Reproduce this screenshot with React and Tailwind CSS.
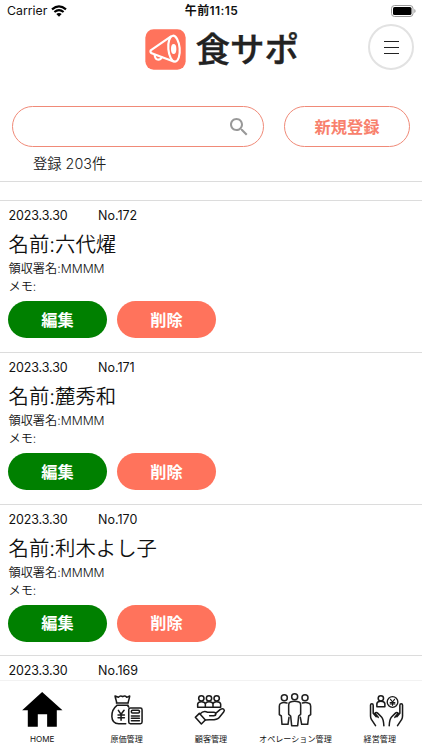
import { useState } from 'react';

const records = [
  { no: 172, date: '2023.3.30', name: '六代燿', receipt: 'MMMM', memo: '' },
  { no: 171, date: '2023.3.30', name: '麓秀和', receipt: 'MMMM', memo: '' },
  { no: 170, date: '2023.3.30', name: '利木よし子', receipt: 'MMMM', memo: '' },
  { no: 169, date: '2023.3.30' }
];

const HomeIcon = () => (
  <svg className="w-[60px] h-10" viewBox="36.6 110 180 120">
    <path d="M127 125L188 180H171V229H142V192H114V229H84V180H67Z" fill="#000" />
  </svg>
);

const CostIcon = () => (
  <svg className="w-[60px] h-10" viewBox="19.8 20 180 120" fill="none" stroke="#1a1a1a" strokeWidth="4.6" strokeLinecap="round" strokeLinejoin="round">
    <path d="M79 67C77 59 75 53 74 47L84 51Q90 44 97 49Q104 44 109 51L118 47C117 54 115 60 113 67" />
    <path d="M78 68H113M80 75H113" />
    <path d="M79 76C60 91 57 130 85 130H106M112 76L115 80" />
    <path d="M84 90L92 102L101 90M92 102V120M83 104H102M83 112H102" />
    <rect x="115" y="83" width="40" height="47" rx="5" />
    <rect x="123" y="90" width="24" height="8" rx="3" />
    <path d="M123 107H147M123 114H147M123 121H147" />
  </svg>
);

const CustomerIcon = () => (
  <svg className="w-[60px] h-10" viewBox="18 20 180 120" fill="none" stroke="#1a1a1a" strokeWidth="4.6" strokeLinecap="round" strokeLinejoin="round">
    <circle cx="79" cy="54" r="8" />
    <circle cx="102" cy="54" r="8" />
    <circle cx="125" cy="54" r="8" />
    <path d="M68 81V71Q69 64 79 64Q90 64 91 71V81ZM91 81V71Q92 64 102 64Q113 64 114 71V81ZM114 81V71Q115 64 125 64Q136 64 137 71V81Z" />
    <path d="M61 111L73 99L91 119L79 131Z" />
    <path d="M75 101C83 92 91 92 98 96H116C125 97 124 106 116 106H104M122 99L136 87C145 82 151 89 146 95L132 112C126 119 117 118 104 118L91 119" />
  </svg>
);

const OperationIcon = () => (
  <svg className="w-[60px] h-10" viewBox="46 20 180 120" fill="none" stroke="#222" strokeWidth="4.6" strokeLinecap="round" strokeLinejoin="round">
    <circle cx="104" cy="52" r="9" />
    <circle cx="135" cy="49" r="9" />
    <circle cx="166" cy="52" r="9" />
    <path d="M122 65Q135 61 148 65Q153 67 153 74V102L147 107L144 136H126L123 107L117 102V74Q117 67 122 65Z" />
    <path d="M112 68Q101 64 93 69Q89 71 89 78V103L95 107L97 132H115L118 111" />
    <path d="M158 68Q169 64 178 69Q183 71 183 78V103L177 107L174 132H156L152 111" />
  </svg>
);

const ManagementIcon = () => (
  <svg className="w-[60px] h-10 overflow-visible" viewBox="29.4 20 180 120" fill="none" stroke="#1a1a1a" strokeWidth="4.6" strokeLinecap="round" strokeLinejoin="round">
    <circle cx="122" cy="54" r="8" />
    <path d="M110 79V70Q111 63 122 63Q133 63 134 70V79Z" />
    <circle cx="157" cy="65" r="16" strokeWidth="4" />
    <path d="M151 57L157 65L163 57M157 65V75M150 67H164M150 71H164" strokeWidth="3.5" />
    <path d="M106 136L94 118Q91 114 91 107V74Q91 70 95 70Q99 70 99 75V99L108 109M104 99Q108 94 113 99L124 110Q130 116 131 136M104 99L114 111" />
    <path d="M172 136L184 118Q187 114 187 107V74Q187 70 183 70Q179 70 179 75V99L170 109M174 99Q170 94 165 99L154 110Q148 116 147 136M174 99L164 111" />
  </svg>
);

const tabs = [
  { label: 'HOME', Icon: HomeIcon },
  { label: '原価管理', Icon: CostIcon },
  { label: '顧客管理', Icon: CustomerIcon },
  { label: 'オペレーション管理', Icon: OperationIcon },
  { label: '経営管理', Icon: ManagementIcon }
];

function StatusBar() {
  return (
    <div className="h-[22px] pl-[7px] pr-1.5 grid grid-cols-3 items-center text-[12.3px] leading-[22px] shrink-0">
      <div className="flex items-center gap-1">
        <span>Carrier</span>
        <svg className="w-4 h-3" viewBox="0 0 16 12" fill="none" stroke="#000" strokeWidth="2.2">
          <path d="M1 4.3Q8 -1.7 15 4.3M3.4 7Q8 3.2 12.6 7" />
          <path d="M8 11.7L5.3 8.9Q8 6.9 10.7 8.9Z" fill="#000" stroke="none" />
        </svg>
      </div>
      <div className="text-center text-[12px] tracking-[0.4px] font-semibold whitespace-nowrap">午前11:15</div>
      <svg className="w-[25px] h-3 justify-self-end -mt-px" viewBox="0 0 25 12">
        <rect x="0.5" y="0.5" width="21.5" height="11" rx="3" fill="none" stroke="#999" />
        <rect x="2" y="2" width="18.5" height="8" rx="1.6" />
        <path d="M23.3 4V8Q24.6 7.3 24.6 6T23.3 4Z" fill="#999" />
      </svg>
    </div>
  );
}

function Header() {
  return (
    <header className="h-[84px] pt-0.5 pl-[145px] pr-2 flex items-start shrink-0">
      <svg className="w-[41px] h-[41px] mt-[5px]" viewBox="434 86 123 123">
        <rect x="435" y="87" width="121" height="121" rx="25" fill="#ff735c" />
        <g fill="none" stroke="#fff" strokeWidth="6.5" strokeLinecap="round" strokeLinejoin="round">
          <ellipse cx="521" cy="145" rx="17" ry="39" transform="rotate(-5 521 145)" />
          <path d="M511 109L451 150Q449 156 454 159L518 183" />
          <path d="M463 164Q464 178 474 178Q481 178 484 171" />
        </g>
        <ellipse cx="520" cy="146" rx="8" ry="15" fill="#fff" />
      </svg>
      <h1 className="ml-[9.5px] text-[34.5px] leading-[51px] font-medium text-[#222] [-webkit-text-stroke:0.4px_#222]">食サポ</h1>
      <button className="ml-auto w-[46px] h-[46px] rounded-full border-2 border-[#e2e2e2] flex flex-col items-center justify-center gap-[5px]">
        <span className="w-[15px] h-px bg-[#222]" />
        <span className="w-[15px] h-px bg-[#222]" />
        <span className="w-[15px] h-px bg-[#222]" />
      </button>
    </header>
  );
}

function RecordRow({ record }) {
  return (
    <li className="h-[151.8px] shrink-0 border-t border-[#dcdcdc] pl-2 pt-1.5">
      <div className="flex text-[12.5px] leading-[18px] pl-[0.5px]">
        <span className="w-[89.5px] tracking-[-0.12px]">{record.date}</span>
        <span>No.{record.no}</span>
      </div>
      {record.name && (
        <>
          <p className="mt-[5px] pl-[0.5px] text-[20.4px] leading-[30px] font-[350]">名前:{record.name}</p>
          <p className="text-[12.2px] leading-[18px] pl-[0.5px] font-[350]">領収署名:{record.receipt}</p>
          <p className="text-[12.2px] leading-[18px] pl-[0.5px] font-[350]">メモ:{record.memo}</p>
          <div className="flex gap-2.5 mt-[5px] text-[16.2px] font-bold text-white">
            <button className="w-[99px] h-[37px] pt-px rounded-full bg-[#008000]">編集</button>
            <button className="w-[99px] h-[37px] pt-px rounded-full bg-[#ff735c]">削除</button>
          </div>
        </>
      )}
    </li>
  );
}

export default function App() {
  const [query, setQuery] = useState('');

  return (
    <div className="w-full h-[750px] overflow-hidden bg-white text-[#111] flex flex-col font-['Inter','Noto_Sans_CJK_JP',sans-serif]">
      <StatusBar />
      <Header />

      <div className="flex gap-5 px-3 h-[41px] shrink-0">
        <label className="w-[252px] h-[41px] rounded-full border border-[#f08a78] flex items-center pl-5 pr-3">
          <input value={query} onChange={e => setQuery(e.target.value)} className="flex-1 min-w-0 outline-none" />
          <svg className="w-6 h-6" viewBox="0 0 24 24" fill="#999">
            <path d="M15.5 14h-.79l-.28-.27C15.41 12.59 16 11.11 16 9.5 16 5.91 13.09 3 9.5 3S3 5.91 3 9.5 5.91 16 9.5 16c1.61 0 3.09-.59 4.23-1.57l.27.28v.79l5 4.99L20.49 19l-4.99-5zm-6 0C7.01 14 5 11.99 5 9.5S7.01 5 9.5 5 14 7.01 14 9.5 11.99 14 9.5 14z" />
          </svg>
        </label>
        <button className="w-[126px] h-[41px] rounded-full border border-[#f08a78] pt-px text-[16.3px] font-bold text-[#f8816d]">新規登録</button>
      </div>

      <p className="pl-[33px] pt-[7px] h-[34px] text-[14.3px] leading-5 shrink-0 text-[#222] font-[350]">登録 203件</p>

      <ul className="flex-1 min-h-0 overflow-hidden flex flex-col border-t border-[#dcdcdc] pt-[18px]">
        {records.map(r => <RecordRow key={r.no} record={r} />)}
      </ul>

      <nav className="h-[70px] shrink-0 border-t border-[#f2f2f2] bg-white grid grid-cols-5 pt-1.5">
        {tabs.map(({ label, Icon }) => (
          <a key={label} className="flex flex-col items-center">
            <Icon />
            <span className="mt-1.5 text-[8.1px] leading-3 whitespace-nowrap">{label}</span>
          </a>
        ))}
      </nav>
    </div>
  );
}
